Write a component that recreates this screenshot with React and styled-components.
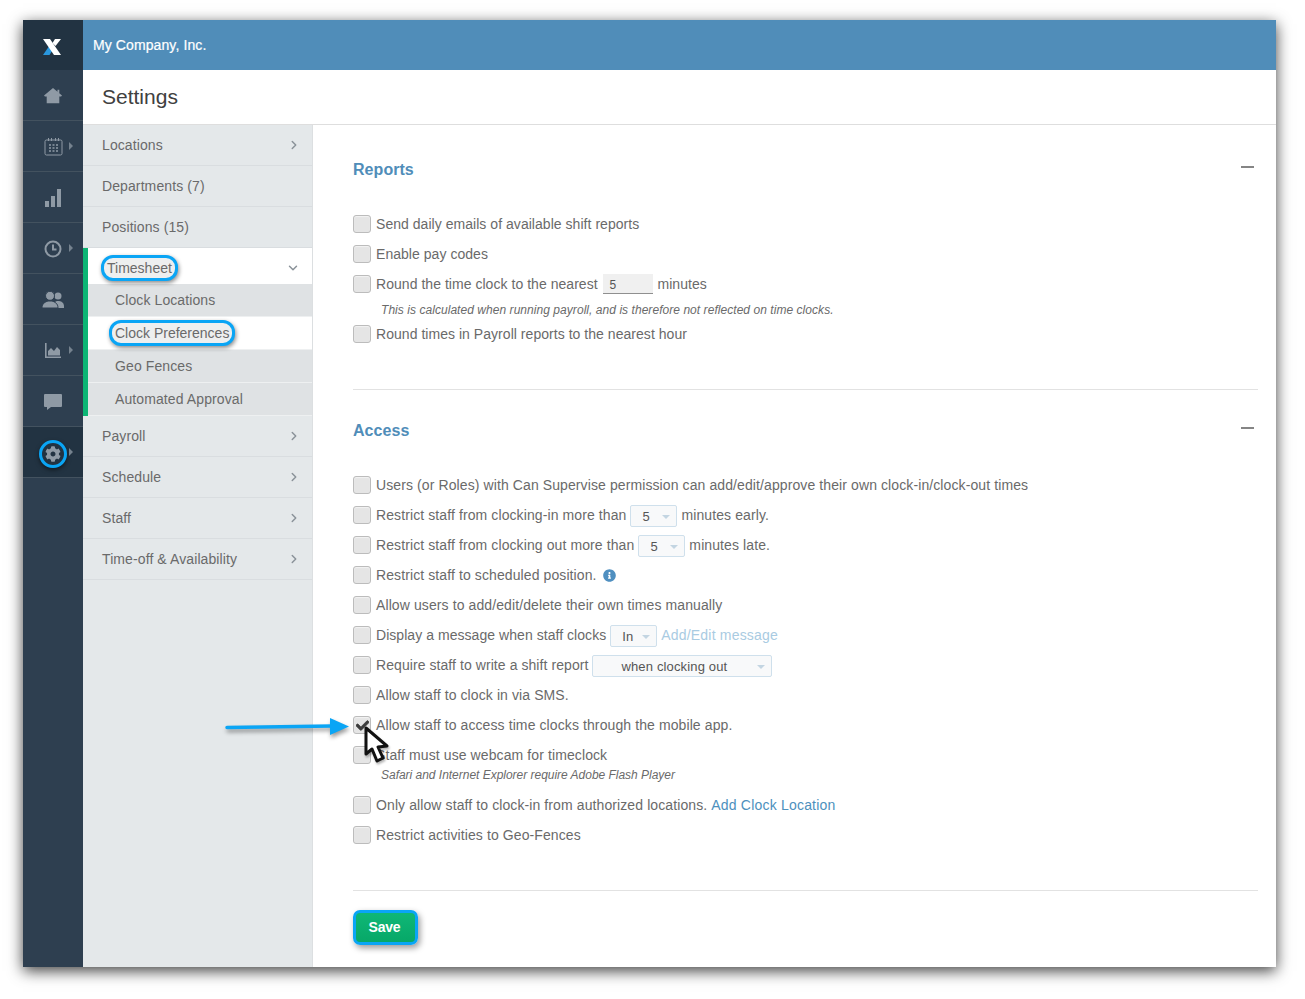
import React from 'react';
import styled, { createGlobalStyle } from 'styled-components';
import { FaCheck, FaInfoCircle, FaCog } from 'react-icons/fa';
import { FiChevronRight, FiChevronDown } from 'react-icons/fi';

const ring = '#0aa5f5';

const Global = createGlobalStyle`
  html, body { margin: 0; padding: 0; background: #fff; }
  body {
    font-family: "Liberation Sans", Arial, sans-serif;
    color: #6a6a6a;
    font-size: 14px;
    letter-spacing: 0.1px;
  }
  * { box-sizing: border-box; }
`;

const Page = styled.div`
  width: 1305px;
  height: 999px;
  padding: 20px 29px 32px 23px;
  overflow: hidden;
`;

const Window = styled.div`
  position: relative;
  display: flex;
  width: 1253px;
  height: 947px;
  background: #fff;
  box-shadow: 0 4px 14px rgba(0, 0, 0, 0.75);
`;

const Rail = styled.nav`
  flex: 0 0 60px;
  background: #2e3f50;
`;

const RailLogo = styled.div`
  height: 50px;
  padding: 4px 2px 0 0;
  background: #223342;
  display: flex;
  align-items: center;
  justify-content: center;
`;

const RailItem = styled.div`
  position: relative;
  height: 51px;
  padding-top: ${(p) => (p.$active ? 3 : 1)}px;
  display: flex;
  align-items: center;
  justify-content: center;
  color: #8f9aa5;
  border-bottom: 1px solid #43525f;
  background: ${(p) => (p.$active ? '#223342' : 'transparent')};
`;

const RailCaret = styled.span`
  position: absolute;
  left: 46px;
  top: 50%;
  margin-top: -4px;
  border-left: 4px solid #75828e;
  border-top: 4px solid transparent;
  border-bottom: 4px solid transparent;
`;

const GearRing = styled.span`
  display: flex;
  align-items: center;
  justify-content: center;
  width: 28px;
  height: 28px;
  border: 3px solid ${ring};
  border-radius: 50%;
  font-size: 16px;
  box-shadow: 0 2px 4px rgba(0, 0, 0, 0.5);
`;

const Main = styled.div`
  flex: 1;
  display: flex;
  flex-direction: column;
  min-width: 0;
`;

const TopBar = styled.header`
  height: 50px;
  background: #508db9;
  color: #fff;
  line-height: 50px;
  padding-left: 10px;
  -webkit-text-stroke: 0.2px #fff;
`;

const TitleBar = styled.div`
  height: 55px;
  padding-left: 19px;
  border-bottom: 1px solid #dedede;
  font-size: 21px;
  letter-spacing: 0;
  line-height: 54px;
  color: #404040;
`;

const Body = styled.div`
  flex: 1;
  display: flex;
  min-height: 0;
`;

const SideNav = styled.aside`
  flex: 0 0 230px;
  background: #e4e8ea;
  border-right: 1px solid #dcdfe1;
`;

const NavRow = styled.div`
  height: 41px;
  display: flex;
  align-items: center;
  justify-content: space-between;
  padding: 0 11px 0 19px;
  border-bottom: 1px solid #d9dde0;
`;

const Chevron = styled(FiChevronRight)`
  color: #8a9299;
  font-size: 14px;
  stroke-width: 2.5;
`;

const OpenGroup = styled.div`
  border-left: 5px solid #0cb574;
`;

const OpenHead = styled.div`
  height: 36px;
  display: flex;
  align-items: center;
  justify-content: space-between;
  padding: 4px 12px 0 19px;
  background: #fff;
`;

const OpenChevron = styled(FiChevronDown)`
  color: #8a9299;
  font-size: 14px;
  stroke-width: 2.5;
`;

const SubRow = styled.div`
  height: 33px;
  display: flex;
  align-items: center;
  padding-left: 27px;
  background: ${(p) => (p.$current ? '#fff' : '#dfe2e4')};
  border-bottom: 1px solid #eef0f1;
`;

const Ringed = styled.span`
  display: inline-block;
  line-height: 18px;
  padding: 1px 3px;
  margin-left: -6px;
  letter-spacing: 0;
  border: 3px solid ${ring};
  border-radius: 12px;
  background: #eeefef;
  box-shadow: 1px 2px 4px rgba(0, 0, 0, 0.45);
`;

const Content = styled.main`
  flex: 1;
  padding: 0 18px 0 40px;
  min-width: 0;
`;

const Section = styled.section`
  border-bottom: 1px solid #e2e2e2;
  height: ${(p) => p.$h}px;
  padding-top: ${(p) => p.$top}px;
  letter-spacing: ${(p) => p.$track}px;
`;

const SectionHead = styled.div`
  display: flex;
  justify-content: space-between;
  align-items: center;
  height: 20px;
  margin-bottom: 29px;
`;

const SectionTitle = styled.h2`
  margin: 0;
  font-size: 16px;
  font-weight: 700;
  letter-spacing: 0.05px;
  color: #508db9;
`;

const Collapse = styled.span`
  width: 13px;
  height: 2px;
  margin: -6px 4px 0 0;
  background: #858585;
`;

const Row = styled.div`
  display: flex;
  align-items: center;
  height: 30px;
  white-space: pre;
  ${(p) => p.$track !== undefined && `letter-spacing: ${p.$track}px;`}
`;

const Box = styled.span`
  flex: none;
  width: 18px;
  height: 18px;
  margin-right: 5px;
  display: flex;
  align-items: center;
  justify-content: center;
  background: #e5e5e5;
  border: 1px solid #bcbcbc;
  border-radius: 3px;
  box-shadow: inset 0 1px 1px #f2f2f2;
  color: #3d3d3d;
  font-size: 13px;
`;

const Tick = styled(FaCheck)`
  stroke: currentColor;
  stroke-width: 30px;
`;

const Hint = styled.div`
  margin-left: 28px;
  font-size: 12px;
  font-style: italic;
  letter-spacing: ${(p) => p.$track}px;
  line-height: 20px;
  margin-top: ${(p) => p.$top || 0}px;
  margin-bottom: ${(p) => p.$bottom || 0}px;
`;

const NumInput = styled.span`
  display: inline-block;
  width: 50px;
  height: 20px;
  margin: 0 1px;
  padding: 4px 0 0 7px;
  background: #f0f0f0;
  border-bottom: 1px solid #8f8f8f;
  font-size: 12px;
  color: #555;
`;

const Select = styled.span`
  position: relative;
  display: inline-flex;
  align-items: center;
  justify-content: ${(p) => (p.$wide ? 'center' : 'flex-start')};
  width: ${(p) => p.$w}px;
  height: 22px;
  margin: 1px ${(p) => p.$after || 0}px 0 0;
  padding: ${(p) => (p.$wide ? '1px 16px 0 0' : '1px 0 0 11px')};
  background: #f8f9fa;
  border: 1px solid #cfe0ec;
  border-radius: 2px;
  font-size: 13px;
  letter-spacing: 0.15px;
  color: #555;
  &::after {
    content: '';
    position: absolute;
    right: 6px;
    top: 9px;
    border-top: 4px solid #c3d5e2;
    border-left: 4px solid transparent;
    border-right: 4px solid transparent;
  }
`;

const Info = styled(FaInfoCircle)`
  margin-left: 2px;
  color: #4f8fc0;
  font-size: 13px;
`;

const Link = styled.a`
  color: ${(p) => (p.$muted ? '#a9cbe2' : '#4d90bd')};
  letter-spacing: 0.2px;
`;

const SaveWrap = styled.div`
  padding-top: 19px;
`;

const SaveButton = styled.button`
  display: block;
  width: 65px;
  height: 35px;
  padding: 0 2px 1px 0;
  border: 3px solid ${ring};
  border-radius: 7px;
  background: linear-gradient(#0fb776, #07a868);
  color: #fff;
  font: 700 14px "Liberation Sans", Arial, sans-serif;
  letter-spacing: -0.2px;
  box-shadow: 2px 3px 6px rgba(0, 0, 0, 0.4);
`;

const ArrowMark = styled.svg`
  position: absolute;
  left: 201px;
  top: 693px;
  filter: drop-shadow(1px 3px 2px rgba(0, 0, 0, 0.4));
`;

const CursorMark = styled.svg`
  position: absolute;
  left: 340px;
  top: 706px;
  filter: drop-shadow(1px 2px 1px rgba(0, 0, 0, 0.3));
`;

const HomeIcon = () => (
  <svg width="18" height="18" viewBox="0 0 20 20" fill="currentColor">
    <path d="M10 1L15 5.200V3H17V6.900L20 9.500L19 10.500H17V18H3V10.500H1L0 9.500Z" />
  </svg>
);

const CalendarIcon = () => (
  <svg width="19" height="19" viewBox="0 0 19 19" fill="none" stroke="currentColor">
    <rect x="1" y="3" width="17" height="15" rx="1.500" />
    <path d="M4.500 1v3M7.500 1v3M11.500 1v3M14.500 1v3" />
    <path d="M5 8h2M8.500 8h2M12 8h2M5 11h2M8.500 11h2M12 11h2M5 14h2M8.500 14h2M12 14h2" strokeWidth="1.600" />
  </svg>
);

const BarsIcon = () => (
  <svg width="16" height="18" viewBox="0 0 16 18" fill="currentColor">
    <rect x="0" y="12" width="4" height="6" />
    <rect x="6" y="7" width="4" height="11" />
    <rect x="12" y="0" width="4" height="18" />
  </svg>
);

const ClockIcon = () => (
  <svg width="18" height="18" viewBox="0 0 18 18" fill="none" stroke="currentColor" strokeWidth="2">
    <circle cx="9" cy="9" r="7.500" />
    <path d="M9 4.500V9.500H12.500" />
  </svg>
);

const UsersIcon = () => (
  <svg width="22" height="17" viewBox="0 0 22 17" fill="currentColor">
    <circle cx="16" cy="5" r="3.500" />
    <path d="M12 17C12 12 13 10.500 15 10H17C20 10.500 22 12 22 15.500V17Z" />
    <circle cx="8" cy="4.800" r="4.500" stroke="#2e3f50" />
    <path d="M0 17C0 12.500 3 11 6 10H10C13 11 16 12.500 16 17Z" stroke="#2e3f50" />
  </svg>
);

const ChartIcon = () => (
  <svg width="16" height="15" viewBox="0 0 16 15" fill="currentColor">
    <path d="M0 0H1.600V13.400H16V15H0Z" />
    <path d="M3 12.500V8L6 5L9 8L12 4L15 7V12.500Z" />
  </svg>
);

const CommentIcon = () => (
  <svg width="18" height="16" viewBox="0 0 18 16" fill="currentColor">
    <path d="M1 0H17A1 1 0 0 1 18 1V12A1 1 0 0 1 17 13H7L3 16V13H1A1 1 0 0 1 0 12V1A1 1 0 0 1 1 0Z" />
  </svg>
);

const railItems = [
  { icon: <HomeIcon /> },
  { icon: <CalendarIcon />, caret: true },
  { icon: <BarsIcon /> },
  { icon: <ClockIcon />, caret: true },
  { icon: <UsersIcon /> },
  { icon: <ChartIcon />, caret: true },
  { icon: <CommentIcon /> },
];

const Check = ({ on, track, children }) => (
  <Row $track={track}>
    <Box>{on && <Tick />}</Box>
    {children}
  </Row>
);

export default function App() {
  return (
    <Page>
      <Global />
      <Window>
        <Rail>
          <RailLogo>
            <svg width="18" height="16" viewBox="0 0 18 16">
              <path d="M0 16L6.500 6.500L10 10.500L6.500 16Z" fill="#2a97dd" />
              <path d="M0 0H7L18 16H11Z" fill="#fff" />
              <path d="M12 0H18L12.500 7L9.500 4Z" fill="#fff" />
            </svg>
          </RailLogo>
          {railItems.map((item, i) => (
            <RailItem key={i}>
              {item.icon}
              {item.caret && <RailCaret />}
            </RailItem>
          ))}
          <RailItem $active>
            <GearRing><FaCog /></GearRing>
            <RailCaret />
          </RailItem>
        </Rail>

        <Main>
          <TopBar>My Company, Inc.</TopBar>
          <TitleBar>Settings</TitleBar>
          <Body>
            <SideNav>
              <NavRow>Locations<Chevron /></NavRow>
              <NavRow>Departments (7)</NavRow>
              <NavRow>Positions (15)</NavRow>
              <OpenGroup>
                <OpenHead>
                  <Ringed>Timesheet</Ringed>
                  <OpenChevron />
                </OpenHead>
                <SubRow>Clock Locations</SubRow>
                <SubRow $current><Ringed>Clock Preferences</Ringed></SubRow>
                <SubRow>Geo Fences</SubRow>
                <SubRow>Automated Approval</SubRow>
              </OpenGroup>
              <NavRow>Payroll<Chevron /></NavRow>
              <NavRow>Schedule<Chevron /></NavRow>
              <NavRow>Staff<Chevron /></NavRow>
              <NavRow>Time-off &amp; Availability<Chevron /></NavRow>
            </SideNav>

            <Content>
              <Section $h={265} $top={35} $track={0.04}>
                <SectionHead>
                  <SectionTitle>Reports</SectionTitle>
                  <Collapse />
                </SectionHead>
                <Check>Send daily emails of available shift reports</Check>
                <Check>Enable pay codes</Check>
                <Check>Round the time clock to the nearest <NumInput>5</NumInput> minutes</Check>
                <Hint $top={1} $bottom={-1} $track={0.05}>This is calculated when running payroll, and is therefore not reflected on time clocks.</Hint>
                <Check>Round times in Payroll reports to the nearest hour</Check>
              </Section>

              <Section $h={501} $top={31} $track={0.1}>
                <SectionHead>
                  <SectionTitle>Access</SectionTitle>
                  <Collapse />
                </SectionHead>
                <Check>Users (or Roles) with Can Supervise permission can add/edit/approve their own clock-in/clock-out times</Check>
                <Check>Restrict staff from clocking-in more than <Select $w={47}>5</Select> minutes early.</Check>
                <Check>Restrict staff from clocking out more than <Select $w={47}>5</Select> minutes late.</Check>
                <Check>Restrict staff to scheduled position. <Info /></Check>
                <Check>Allow users to add/edit/delete their own times manually</Check>
                <Check track={0.05}>Display a message when staff clocks <Select $w={47} $after={4}>In</Select><Link $muted>Add/Edit message</Link></Check>
                <Check track={0.07}>Require staff to write a shift report <Select $w={180} $wide>when clocking out</Select></Check>
                <Check>Allow staff to clock in via SMS.</Check>
                <Check on>Allow staff to access time clocks through the mobile app.</Check>
                <Check>Staff must use webcam for timeclock</Check>
                <Hint $top={-5} $bottom={5} $track={-0.02}>Safari and Internet Explorer require Adobe Flash Player</Hint>
                <Check>Only allow staff to clock-in from authorized locations. <Link>Add Clock Location</Link></Check>
                <Check>Restrict activities to Geo-Fences</Check>
              </Section>

              <SaveWrap>
                <SaveButton>Save</SaveButton>
              </SaveWrap>
            </Content>
          </Body>
        </Main>

        <ArrowMark width="130" height="28" viewBox="0 0 130 28">
          <path d="M3 14.500L108 13" stroke={ring} strokeWidth="3.500" strokeLinecap="round" fill="none" />
          <path d="M106 5L125 13.500L106 22Z" fill={ring} />
        </ArrowMark>
        <CursorMark width="30" height="40" viewBox="0 0 30 40">
          <path d="M3 2L3 28L9 23L14 35L20 32L15 21L24 20Z" fill="#fff" stroke="#111" strokeWidth="3" strokeLinejoin="round" />
        </CursorMark>
      </Window>
    </Page>
  );
}
